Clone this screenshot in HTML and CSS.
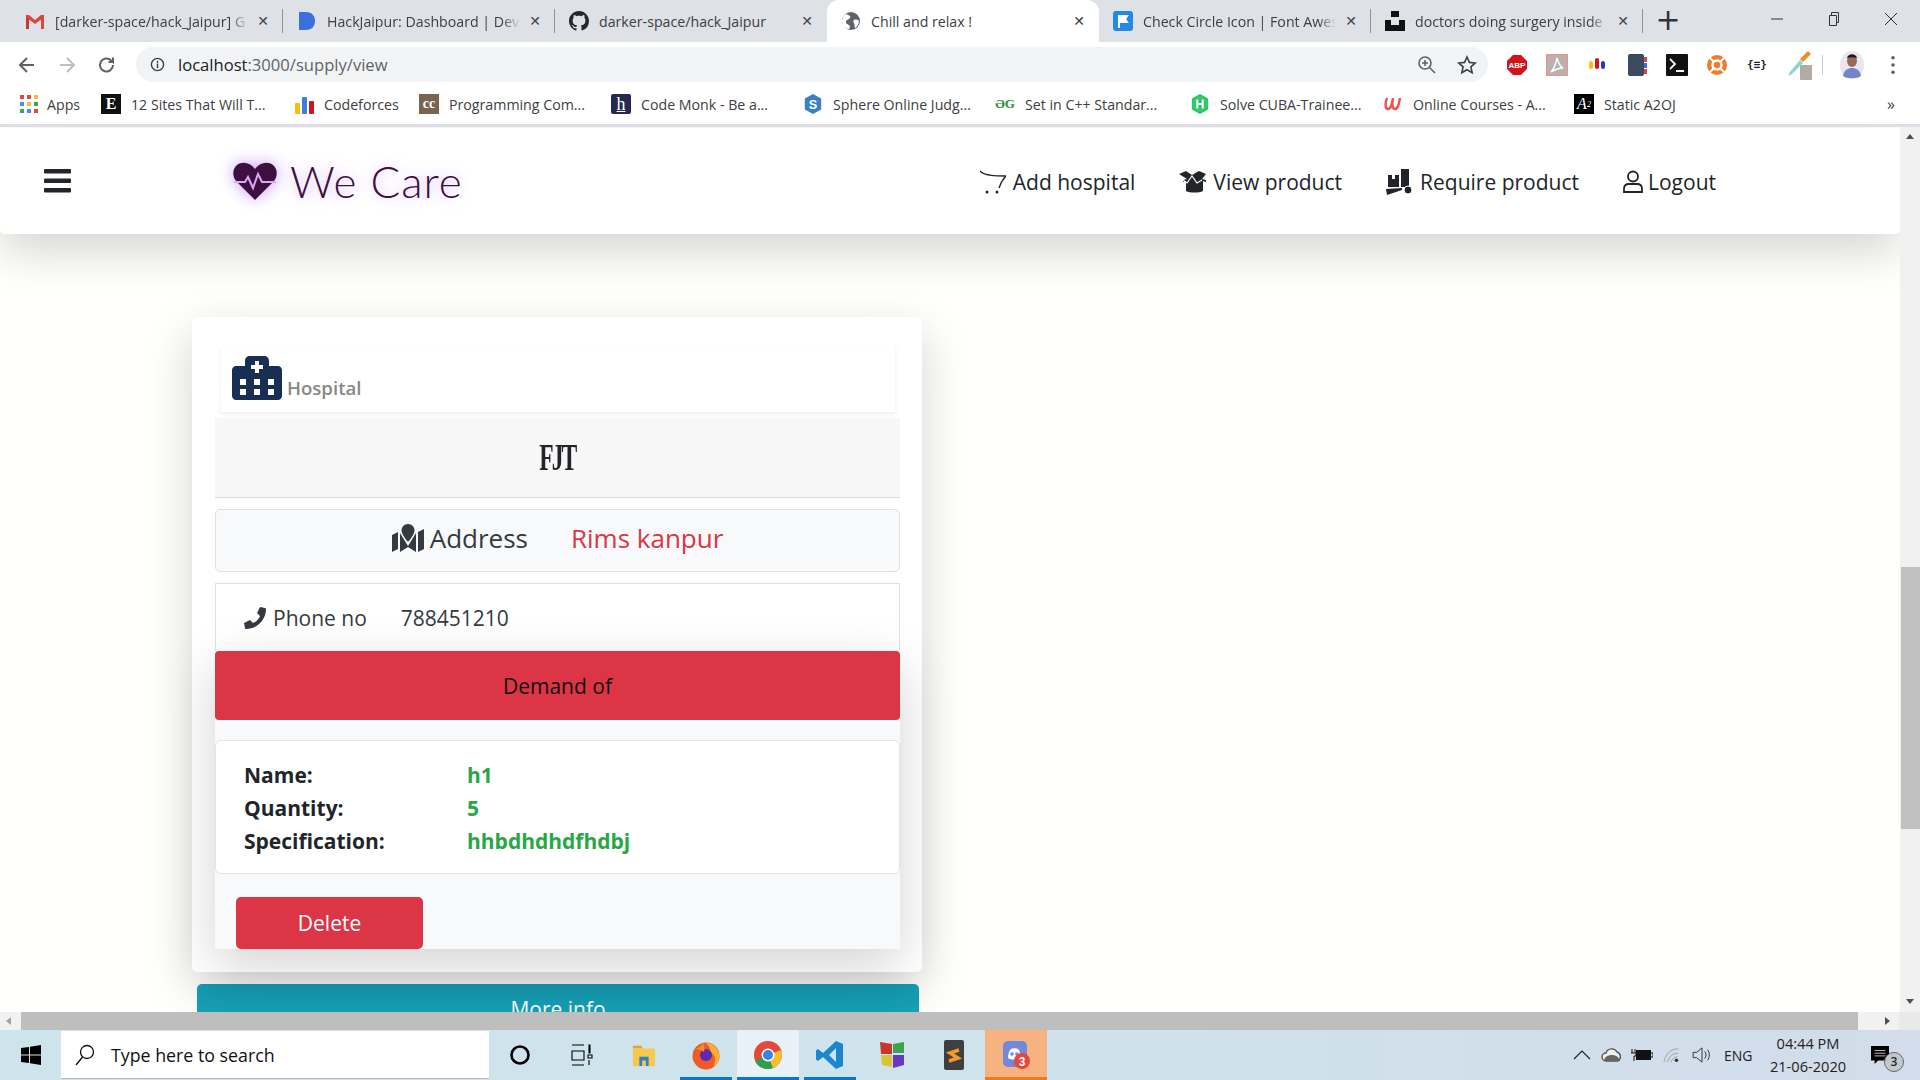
FILE: index.html
```html
<!DOCTYPE html>
<html lang="en">
<head>
<meta charset="utf-8">
<title>Chill and relax !</title>
<link rel="stylesheet" href="styles.css">
</head>
<body>
<div class="browser">
  <div class="tabstrip">
    <div class="tab sep">
      <svg class="fav" viewBox="0 0 20 20"><path d="M1 4h3l6 5 6-5h3v14h-3V8.500L10 13 4 8.500V18H1z" fill="#d9483b"/><path d="M4 18V8.500L1 5v13z" fill="#c5392c"/></svg>
      <span class="tab-title">[darker-space/hack_Jaipur] G</span><span class="x">✕</span>
    </div>
    <div class="tab sep">
      <svg class="fav" viewBox="0 0 20 20"><path d="M2 1h7c6 0 9 4 9 9s-3 9-9 9H2z" fill="#3b6fe0"/></svg>
      <span class="tab-title">HackJaipur: Dashboard | Devf</span><span class="x">✕</span>
    </div>
    <div class="tab">
      <svg class="fav" viewBox="0 0 16 16"><path fill="#24292e" d="M8 0C3.58 0 0 3.58 0 8c0 3.54 2.29 6.53 5.47 7.59.4.07.55-.17.55-.38 0-.19-.01-.82-.01-1.49-2.01.37-2.53-.49-2.69-.94-.09-.23-.48-.94-.82-1.13-.28-.15-.68-.52-.01-.53.63-.01 1.08.58 1.23.82.72 1.21 1.87.87 2.33.66.07-.52.28-.87.51-1.07-1.78-.2-3.64-.89-3.64-3.95 0-.87.31-1.59.82-2.15-.08-.2-.36-1.02.08-2.12 0 0 .67-.21 2.2.82.64-.18 1.32-.27 2-.27.68 0 1.36.09 2 .27 1.53-1.04 2.2-.82 2.2-.82.44 1.1.16 1.92.08 2.12.51.56.82 1.27.82 2.15 0 3.07-1.87 3.75-3.65 3.95.29.25.54.73.54 1.48 0 1.07-.01 1.93-.01 2.2 0 .21.15.46.55.38A8.013 8.013 0 0016 8c0-4.42-3.58-8-8-8z"/></svg>
      <span class="tab-title">darker-space/hack_Jaipur</span><span class="x">✕</span>
    </div>
    <div class="tab active">
      <svg class="fav" viewBox="0 0 20 20"><circle cx="10" cy="10" r="9" fill="#5f6368"/><path d="M5 3c3 1 5 2 4 4S5 8 5 11s4 2 4 5l-1 2c-4 0-7-3-7-8 0-3 2-6 4-7zM13 9c2-1 4 0 5 1 0 3-2 6-4 7-1-2 0-3-1-5-1-1-1-2 0-3z" fill="#fff"/></svg>
      <span class="tab-title">Chill and relax !</span><span class="x">✕</span>
    </div>
    <div class="tab sep">
      <svg class="fav" viewBox="0 0 20 20"><rect width="20" height="20" rx="3" fill="#228ae6"/><path d="M6 4v13M6 5h8l-2 3 2 3H6" stroke="#fff" stroke-width="2" fill="#fff"/></svg>
      <span class="tab-title">Check Circle Icon | Font Awes</span><span class="x">✕</span>
    </div>
    <div class="tab sep">
      <svg class="fav" viewBox="0 0 20 20"><path d="M6 0h8v6H6zM0 9h6v5h8V9h6v11H0z" fill="#111"/></svg>
      <span class="tab-title">doctors doing surgery inside</span><span class="x">✕</span>
    </div>
    <span class="newtab">+</span>
    <div class="winctl">
      <svg class="wc" viewBox="0 0 14 14"><path d="M1 7h12" stroke="#333" fill="none"/></svg>
      <svg class="wc" viewBox="0 0 14 14"><path d="M2.500 3.500h7v10h-7zM4.500 3.500V.5h7v10h-2" stroke="#333" fill="none"/></svg>
      <svg class="wc" viewBox="0 0 14 14"><path d="M1 1l12 12M13 1L1 13" stroke="#333" fill="none"/></svg>
    </div>
  </div>

  <div class="toolbar">
    <div class="nav-btns">
      <svg class="tb" viewBox="0 0 20 20"><path d="M17 10H4M10 3l-7 7 7 7" stroke="#5f6368" stroke-width="2" fill="none"/></svg>
      <svg class="tb" viewBox="0 0 20 20"><path d="M3 10h13M10 3l7 7-7 7" stroke="#bcbec1" stroke-width="2" fill="none"/></svg>
      <svg class="tb" viewBox="0 0 20 20"><path d="M16 10a6.500 6.500 0 1 1-2-4.700L16 7V2.500M16 7h-4.500" stroke="#5f6368" stroke-width="2" fill="none"/></svg>
    </div>
    <div class="omnibox">
      <svg class="omni-i" viewBox="0 0 16 16"><circle cx="8" cy="8" r="6.500" stroke="#3c4043" stroke-width="1.500" fill="none"/><path d="M8 7v5M8 4v2" stroke="#3c4043" stroke-width="1.500"/></svg>
      <span class="url">localhost<span class="url-dim">:3000/supply/view</span></span>
      <svg class="omni-r" viewBox="0 0 20 20"><circle cx="8" cy="8" r="6" stroke="#5f6368" stroke-width="1.600" fill="none"/><path d="M12.500 12.500L18 18M5 8h6M8 5v6" stroke="#5f6368" stroke-width="1.600"/></svg>
      <svg class="omni-r" viewBox="0 0 20 20"><path d="M10 2l2.400 5.400 5.800.6-4.300 3.900 1.200 5.800-5.100-3-5.100 3 1.200-5.800L1.800 8l5.800-.6z" stroke="#3c4043" stroke-width="1.600" fill="none"/></svg>
    </div>
    <div class="exts">
      <svg class="ext" viewBox="0 0 22 22"><path d="M7 1h8l6 6v8l-6 6H7l-6-6V7z" fill="#d3121c"/><text x="11" y="14" class="abp">ABP</text></svg>
      <svg class="ext" viewBox="0 0 22 22"><rect x=".5" y=".5" width="21" height="21" fill="#b9b1ad" stroke="#f0908a"/><path d="M11 4c-1 4-2 10-6 14 5-3 8-4 12-4-4-2-5-6-6-10z" fill="none" stroke="#fff" stroke-width="1.400"/></svg>
      <svg class="ext" viewBox="0 0 22 22"><rect x="3" y="7" width="4" height="8" rx="2" fill="#f4c20d"/><rect x="9" y="4" width="4" height="11" rx="2" fill="#d3121c"/><rect x="15" y="7" width="4" height="8" rx="2" fill="#1a3fd0"/></svg>
      <svg class="ext" viewBox="0 0 22 22"><rect x="2" y="0" width="16" height="22" rx="2" fill="#3b4a5c"/><rect x="18" y="3" width="3" height="5" fill="#d9483b"/><rect x="18" y="9" width="3" height="5" fill="#3b6fe0"/><rect x="18" y="15" width="3" height="5" fill="#d9483b"/></svg>
      <svg class="ext" viewBox="0 0 22 22"><rect width="22" height="22" rx="1" fill="#111"/><path d="M4 5l5 5-5 5M10 17h8" stroke="#fff" stroke-width="1.800" fill="none"/></svg>
      <svg class="ext" viewBox="0 0 22 22"><circle cx="11" cy="11" r="10" fill="#ef7c2d"/><circle cx="11" cy="11" r="4.500" fill="none" stroke="#fff" stroke-width="2.500"/><path d="M4 4l4 4M18 4l-4 4M4 18l4-4M18 18l-4-4" stroke="#fff" stroke-width="2"/></svg>
      <span class="ext json">{≡}</span>
      <svg class="ext" viewBox="0 0 26 30"><path d="M22 1l3 3-8 8-3-3z" fill="#f08a24"/><path d="M14 10l3 3-11 11-4 2 2-4z" fill="#8ed0d6"/><rect x="14" y="15" width="12" height="15" rx="1" fill="#b2aaa4"/></svg>
      <span class="ext-sep"></span>
      <svg class="avatar" viewBox="0 0 24 28"><ellipse cx="12" cy="14" rx="12" ry="14" fill="#e9e6ef"/><ellipse cx="12" cy="10" rx="5" ry="6" fill="#9a6b52"/><path d="M7 7c1-5 9-5 10 0-3-1-7-1-10 0z" fill="#1d1a1e"/><path d="M3 25c1-6 5-8 9-8s8 2 9 8c-3 3-15 3-18 0z" fill="#7484c8"/></svg>
      <svg class="menu-dots" viewBox="0 0 6 22"><circle cx="3" cy="3" r="2" fill="#5f6368"/><circle cx="3" cy="11" r="2" fill="#5f6368"/><circle cx="3" cy="19" r="2" fill="#5f6368"/></svg>
    </div>
  </div>

  <div class="bookmarks">
    <div class="bm"><svg class="fav bm-apps" viewBox="0 0 18 18"><g><rect x="0" y="0" width="4" height="4" fill="#e8453c"/><rect x="7" y="0" width="4" height="4" fill="#e8453c"/><rect x="14" y="0" width="4" height="4" fill="#f9bb2d"/><rect x="0" y="7" width="4" height="4" fill="#4a8af4"/><rect x="7" y="7" width="4" height="4" fill="#f9bb2d"/><rect x="14" y="7" width="4" height="4" fill="#3aa757"/><rect x="0" y="14" width="4" height="4" fill="#3aa757"/><rect x="7" y="14" width="4" height="4" fill="#4a8af4"/><rect x="14" y="14" width="4" height="4" fill="#e8453c"/></g></svg><span>Apps</span></div>
    <div class="bm"><span class="fav bm-e">E</span><span>12 Sites That Will T...</span></div>
    <div class="bm"><svg class="fav" viewBox="0 0 20 20"><rect x="1" y="9" width="5" height="11" rx="1" fill="#f4c20d"/><rect x="8" y="3" width="5" height="17" rx="1" fill="#3b7fd9"/><rect x="15" y="7" width="5" height="13" rx="1" fill="#d3121c"/></svg><span>Codeforces</span></div>
    <div class="bm"><span class="fav bm-cc">cc</span><span>Programming Com...</span></div>
    <div class="bm"><span class="fav bm-h">h</span><span>Code Monk - Be a...</span></div>
    <div class="bm"><svg class="fav" viewBox="0 0 20 22"><path d="M10 0l9 5v12l-9 5-9-5V5z" fill="#3a80c9"/><text x="10" y="16" class="gl">S</text></svg><span>Sphere Online Judg...</span></div>
    <div class="bm"><span class="fav bm-gfg">ƏG</span><span>Set in C++ Standar...</span></div>
    <div class="bm"><svg class="fav" viewBox="0 0 20 22"><path d="M10 0l9 5v12l-9 5-9-5V5z" fill="#2ec866"/><path d="M7 6v10M13 6v10M7 11h6" stroke="#fff" stroke-width="2.200"/></svg><span>Solve CUBA-Trainee...</span></div>
    <div class="bm"><svg class="fav" viewBox="0 0 20 20"><path d="M4 4c-2 5-2 11 1 11 3 0 4-6 5-11-1 5-1 11 2 11 3 0 4-5 5-11" stroke="#ec5252" stroke-width="2.400" fill="none"/></svg><span>Online Courses - A...</span></div>
    <div class="bm"><span class="fav bm-a">A<sup>2</sup></span><span>Static A2OJ</span></div>
    <span class="bm-more">»</span>
  </div>

  <div class="viewport">
    <div class="page">
      <header class="navbar">
        <svg class="burger" viewBox="0 0 27 24"><rect y="0" width="27" height="4.500" rx="1"/><rect y="9.500" width="27" height="4.500" rx="1"/><rect y="19" width="27" height="4.500" rx="1"/></svg>
        <div class="brand">
          <svg class="heart" viewBox="0 0 44 40"><path d="M22 39L4 21C-1 16-1 8 4 4c5-4 13-3 18 4 5-7 13-8 18-4 5 4 5 12 0 17z" fill="#3f0f40"/><path d="M1 21h11l3-5 5 11 5-14 4 8h14" stroke="#d9a9f5" stroke-width="2" fill="none"/></svg>
          <span class="brand-text">We Care</span>
        </div>
        <nav class="links">
          <a class="link"><svg class="ic-cart" viewBox="0 0 26 24"><path d="M0 1c5 5 16 5 26 5-4 4-6 9-7 12" stroke="#212529" stroke-width="1.300" fill="none"/><circle cx="7" cy="22" r="1.500" fill="#212529"/><circle cx="17" cy="22" r="1.500" fill="#212529"/></svg>Add hospital</a>
          <a class="link"><svg class="ic-box" viewBox="0 0 27 22"><path d="M0 3l7-3 6 4 7-4 7 3-4 5 4 1v2l-3-1v10c-4 2-13 2-17 0V10l-3 1V9l4-1z" fill="#212529"/><path d="M4 9l4 3 5-7 5 7 5-3" stroke="#fff" stroke-width="1.200" fill="none"/></svg>View product</a>
          <a class="link"><svg class="ic-truck" viewBox="0 0 27 26"><path d="M15 0h8v18h-8z" fill="#212529"/><path d="M2 6h11v12H2z" fill="#212529"/><path d="M6 6h3v4H6z" fill="#fff"/><path d="M0 20l16-1v2L1 26z" fill="#212529"/><circle cx="22" cy="21" r="4" fill="#212529" stroke="#fff"/></svg>Require product</a>
          <a class="link link-user"><svg class="ic-user" viewBox="0 0 20 24"><circle cx="10" cy="6.500" r="5" stroke="#212529" stroke-width="1.800" fill="none"/><path d="M1 22v-3c0-3 2-5 5-5h8c3 0 5 2 5 5v3z" stroke="#212529" stroke-width="1.800" fill="none"/></svg>Logout</a>
        </nav>
      </header>

      <main class="content">
        <section class="card">
          <div class="hosp-head">
            <svg class="ic-hosp" viewBox="0 0 50 44"><path d="M13 5c0-3 2-5 5-5h14c3 0 5 2 5 5v5h9c2 0 4 2 4 4v26c0 2-2 4-4 4H4c-2 0-4-2-4-4V14c0-2 2-4 4-4h9z" fill="#172f53"/><path d="M23 5h4v4h4v4h-4v4h-4v-4h-4V9h4z" fill="#fff"/><g fill="#fff"><rect x="8" y="23" width="6" height="6"/><rect x="22" y="23" width="6" height="6"/><rect x="36" y="23" width="6" height="6"/><rect x="8" y="33" width="6" height="6"/><rect x="22" y="33" width="6" height="6"/><rect x="36" y="33" width="6" height="6"/></g></svg>
            <span class="hosp-label">Hospital</span>
          </div>
          <div class="hosp-name"><span class="hosp-name-text">FJT</span></div>
          <div class="address">
            <svg class="ic-map" viewBox="0 0 32 28"><path d="M0 11l6-3v17l-6 3zM26 8l6-3v20l-6 3zM8 9l8 13 8-13v19l-8-5-8 5z" fill="#343a40"/><path d="M16 0c4 0 6.500 3 6.500 6.500 0 3-3.500 8-6.500 11.500-3-3.500-6.500-8.500-6.500-11.500C9.500 3 12 0 16 0z" fill="#343a40"/></svg>
            <span class="addr-label">Address</span>
            <span class="addr-val">Rims kanpur</span>
          </div>
          <div class="phone">
            <svg class="ic-phone" viewBox="0 0 22 22"><path d="M21 1l-5-1-3 6 3 3c-1 3-4 6-7 7l-3-3-6 3 1 5c0 1 1 1 1 1C13 22 22 13 22 2c0 0 0-1-1-1z" fill="#343a40"/></svg>
            <span class="ph-label">Phone no</span>
            <span class="ph-val">788451210</span>
          </div>
          <div class="demand-block">
            <div class="demand">Demand of</div>
            <div class="panel">
              <dl class="specs">
                <dt>Name:</dt><dd>h1</dd>
                <dt>Quantity:</dt><dd>5</dd>
                <dt>Specification:</dt><dd>hhbdhdhdfhdbj</dd>
              </dl>
              <button class="delete">Delete</button>
            </div>
          </div>
        </section>
        <button class="more">More info</button>
      </main>
    </div>
    <div class="vscroll">
      <span class="arr-up"></span>
      <span class="vthumb"></span>
      <span class="arr-down"></span>
    </div>
  </div>

  <div class="hscroll">
    <span class="arr-left"></span>
    <span class="hthumb"></span>
    <span class="arr-right"></span>
    <span class="corner"></span>
  </div>

  <div class="taskbar">
    <div class="start"><svg class="win" viewBox="0 0 20 20"><path d="M0 3l8-1v7.500H0zM9 1.800L20 0v9.500H9zM0 10.500h8V18l-8-1zM9 10.500h11V20L9 18.200z" fill="#000"/></svg></div>
    <div class="search">
      <svg class="search-i" viewBox="0 0 20 22"><circle cx="12" cy="8" r="6.500" stroke="#111" stroke-width="1.300" fill="none"/><path d="M7.500 13L1 21" stroke="#111" stroke-width="1.300"/></svg>
      <span>Type here to search</span>
    </div>
    <div class="tasks">
      <div class="task"><svg class="ti" viewBox="0 0 24 24"><circle cx="12" cy="12" r="8.500" stroke="#000" stroke-width="2.600" fill="none"/></svg></div>
      <div class="task"><svg class="ti" viewBox="0 0 24 24"><path d="M2 2h12M2 22h12M2 8h12v9H2zM19 2v8h1V2zM18 12h4v3h-4zM19 17v5" stroke="#000" stroke-width="1.100" fill="none"/></svg></div>
      <div class="task"><svg class="ti" viewBox="0 0 26 26"><path d="M1 3h9l2 3H1z" fill="#dca53a"/><path d="M1 6h24v19H1z" fill="#f6c94c"/><path d="M8 25V15h10v10h-3v-6h-4v6z" fill="#2f7fcf"/></svg></div>
      <div class="task run"><svg class="ti-lg" viewBox="0 0 30 30"><circle cx="15" cy="16" r="13.500" fill="#ef5a2a"/><path d="M15 3c4 0 11 3 13 11 1 6-2 11-6 13 4-6 2-13-3-15 1-3-1-6-4-9z" fill="#fdb32b"/><circle cx="15" cy="15" r="6" fill="#5b2ab0"/><path d="M12 3c-2 4-5 5-8 6 3 0 7 1 9 3 1-3 0-6-1-9z" fill="#f88c1e"/></svg></div>
      <div class="task run active-task"><svg class="ti-lg" viewBox="0 0 30 30"><circle cx="15" cy="15" r="14" fill="#e2483b"/><path d="M15 15L2 21A14 14 0 0 0 20 28z" fill="#2f9e4f"/><path d="M15 15L20 28A14 14 0 0 0 28 10z" fill="#f6c12d"/><circle cx="15" cy="15" r="6.500" fill="#fff"/><circle cx="15" cy="15" r="5" fill="#3b82e6"/></svg></div>
      <div class="task run"><svg class="ti-lg" viewBox="0 0 30 30"><path d="M21 1l7 3v22l-7 3L8 17l-5 4-2-1.500V10.500L3 9l5 4zM21 8l-7 7 7 7z" fill="#1a86d0"/></svg></div>
      <div class="task"><svg class="ti-lg" viewBox="0 0 30 30"><path d="M3 2l12 2v10H4z" fill="#c8352e"/><path d="M16 4l11-2v11H16z" fill="#3aa54a"/><path d="M4 15h11v12l-10-2z" fill="#d9c23a"/><path d="M16 15h11v10l-11 3z" fill="#6a35c2"/></svg></div>
      <div class="task"><svg class="ti-lg" viewBox="0 0 30 30"><rect x="5" width="20" height="30" rx="2" fill="#3d3f41"/><path d="M20 10l-9 3 8 5-9 3" stroke="#f79a25" stroke-width="3.500" fill="none"/></svg></div>
      <div class="task discord"><svg class="ti-lg" viewBox="0 0 30 30"><rect x="2" y="1" width="24" height="26" rx="5" fill="#7289da"/><path d="M7 18c3 2 9 2 13 0-1-5-1-7-3-9-2-1-5-1-7 0-2 2-3 5-3 9z" fill="#fff"/><circle cx="11" cy="14" r="1.800" fill="#7289da"/><circle cx="16" cy="14" r="1.800" fill="#7289da"/><circle cx="21" cy="21" r="8" fill="#e8453c"/><text x="21" y="25.500" class="badge-t">3</text></svg></div>
    </div>
    <div class="tray">
      <svg class="tr caret" viewBox="0 0 18 10"><path d="M1 9l8-8 8 8" stroke="#222" stroke-width="1.200" fill="none"/></svg>
      <svg class="tr" viewBox="0 0 22 16"><path d="M5 14a4 4 0 0 1 0-8 6 6 0 0 1 11-1 5 5 0 0 1 1 9z" fill="#f2f2f2" stroke="#555" stroke-width="1.400"/><path d="M3 14c0-4 4-6 8-6s7 2 8 6z" fill="#666"/></svg>
      <svg class="tr" viewBox="0 0 22 14"><rect x="5" y="2" width="15" height="10" fill="#111"/><path d="M20 5h2v4h-2M1 1v4M4 1v4M0 5h5v3H3v5" stroke="#111" fill="none"/></svg>
      <svg class="tr" viewBox="0 0 20 18"><circle cx="15" cy="15" r="2" fill="#333"/><path d="M1 17C2 9 8 2 17 2M5 17c1-5 5-10 12-10M9 17c1-3 3-6 7-6" stroke="#999" fill="none"/></svg>
      <svg class="tr" viewBox="0 0 22 18"><path d="M1 6h4l6-5v16l-6-5H1z" stroke="#222" fill="none"/><path d="M14 5c2 2 2 6 0 8M17 3c3 3 3 9 0 12" stroke="#222" fill="none"/></svg>
      <span class="lang">ENG</span>
      <div class="clock"><span>04:44 PM</span><span>21-06-2020</span></div>
      <div class="notif">
        <svg class="notif-i" viewBox="0 0 22 20"><path d="M1 0h20v16H9l-4 4v-4H1z" fill="#000"/><path d="M5 5h12M5 8h12M5 11h12" stroke="#fff" stroke-width=".800"/></svg>
        <span class="notif-b">3</span>
      </div>
    </div>
  </div>
</div>
</body>
</html>
```

FILE: styles.css
```css
* { box-sizing: border-box; }
html, body { margin: 0; height: 100%; overflow: hidden; }
body { font-family: "Open Sans", "Noto Sans", sans-serif; color: #212529; }
.browser { display: flex; flex-direction: column; height: 1080px; width: 1920px; }

/* tab strip */
.tabstrip { display: flex; align-items: stretch; height: 42px; background: #dee1e6; padding-left: 11px; flex: none; }
.tab { width: 272px; display: flex; align-items: center; padding: 0 11px 0 14px; position: relative; font-size: 14.200px; color: #3c4043; }
.tab.sep::after { content: ""; position: absolute; right: 0; top: 9px; height: 24px; width: 1px; background: #8f9296; }
.tab.active { background: #fff; border-radius: 12px 12px 0 0; padding-left: 14px; }
.fav { width: 20px; height: 20px; flex: none; }
.tab-title { flex: 1; margin-left: 10px; white-space: nowrap; overflow: hidden; -webkit-mask-image: linear-gradient(to right, #000 90%, transparent 99%); mask-image: linear-gradient(to right, #000 90%, transparent 99%); }
.tab.active .tab-title, .tab:nth-child(3) .tab-title { -webkit-mask-image: none; mask-image: none; }
.x { width: 18px; margin-left: 4px; text-align: center; font-size: 14px; font-weight: 700; font-family: "DejaVu Sans", sans-serif; color: #3c4043; flex: none; }
.newtab { font-size: 30px; line-height: 40px; width: 50px; text-align: center; color: #333; font-family: "DejaVu Sans", sans-serif; }
.winctl { margin-left: auto; display: flex; align-items: flex-start; padding: 12px 22px 0 0; gap: 43px; }
.wc { width: 14px; height: 14px; }

/* toolbar */
.toolbar { height: 42px; padding-top: 3px; background: #fff; display: flex; align-items: center; flex: none; }
.nav-btns { display: flex; align-items: center; width: 136px; padding-left: 17px; gap: 20px; }
.tb { width: 20px; height: 20px; }
.omnibox { width: 1352px; height: 35px; border-radius: 18px; background: #f1f3f4; display: flex; align-items: center; padding-left: 14px; font-size: 16.600px; }
.omni-i { width: 15px; height: 15px; }
.url { margin-left: 13px; color: #202124; flex: 1; }
.url-dim { color: #5f6368; }
.omni-r { width: 20px; height: 20px; margin-right: 20px; }
.omni-r:last-child { margin-right: 11px; }
.exts { display: flex; align-items: center; padding-left: 18px; }
.ext { width: 22px; height: 22px; margin-right: 18px; flex: none; }
.ext.json { font-size: 11px; font-weight: 700; text-align: center; line-height: 22px; color: #222; font-family: "DejaVu Sans Mono", monospace; white-space: nowrap; }
svg.ext:nth-child(8) { width: 26px; height: 30px; margin-right: 10px; }
.ext-sep { width: 1px; height: 20px; background: #ccc; margin-right: 17px; }
.avatar { width: 24px; height: 28px; margin-right: 26px; }
.menu-dots { width: 6px; height: 20px; }
.abp { font: 700 8px "Liberation Sans", sans-serif; fill: #fff; text-anchor: middle; }
.gl { font: 700 14px "Liberation Sans", sans-serif; fill: #fff; text-anchor: middle; }
.badge-t { font: 700 12px "Liberation Sans", sans-serif; fill: #fff; text-anchor: middle; }

/* bookmarks */
.bookmarks { height: 43px; background: #fff; display: grid; grid-template-columns: 81px 193px 125px 192px 192px 192px 195px 193px 191px 307px 20px; padding-left: 20px; align-items: center; font-size: 14.200px; color: #3c4043; border-bottom: 3px solid #dfdee6; flex: none; }
.bm { display: flex; align-items: center; gap: 10px; white-space: nowrap; }
.bm .fav { display: flex; align-items: center; justify-content: center; font-family: "Liberation Serif", serif; }
.bm .bm-apps { width: 18px; height: 18px; margin-right: -1px; }
.bm-e { background: #111; color: #fff; font-weight: 700; font-size: 16px; }
.bm-cc { background: #7a6450; color: #fff; font-weight: 700; font-size: 14px; }
.bm-h { background: #25294f; color: #fff; font-size: 18px; border-radius: 2px; text-decoration: underline; }
.bm-gfg { color: #2f8d46; font-size: 13px; font-weight: 700; font-family: "Liberation Sans", sans-serif; }
.bm-a { background: #000; color: #fff; font-size: 16px; font-style: italic; }
.bm-a sup { font-size: 8px; }
.bm-more { font-size: 16px; text-align: center; }

/* viewport */
.viewport { flex: 1; display: flex; min-height: 0; }
.page { width: 1900px; background: #fffffb; overflow: hidden; }
.navbar { height: 106px; margin-top: 1px; background: #fff; border-radius: 0 0 5px 5px; box-shadow: 0 16px 48px rgba(0, 0, 0, .175); display: flex; align-items: center; padding: 0 184px 0 44px; position: relative; z-index: 2; }
.burger { width: 27px; height: 24px; fill: #212529; }
.brand { display: flex; align-items: center; margin-left: 162px; }
.heart { width: 44px; height: 40px; filter: drop-shadow(0 0 8px #c79cf5); }
.brand-text { font-family: "Lato", sans-serif; font-weight: 300; font-size: 44px; color: #3f0f40; margin-left: 13px; letter-spacing: 1px; text-shadow: 0 0 14px #d0a8fa; }
.links { margin-left: auto; display: flex; gap: 44px; align-items: center; padding-top: 2px; }
.link { display: flex; align-items: center; font-size: 21px; color: #212529; gap: 7px; white-space: nowrap; }
.link-user { gap: 5px; }
.ic-cart { width: 26px; height: 24px; }
.ic-box { width: 27px; height: 22px; }
.ic-truck { width: 27px; height: 26px; }
.ic-user { width: 20px; height: 24px; }

.content { padding: 83px 0 0 192px; }
.card { width: 730px; height: 655px; background: #fff; border-radius: 5px; box-shadow: 0 16px 48px rgba(0, 0, 0, .175); padding: 28px 22px 0 23px; position: relative; z-index: 1; }
.hosp-head { margin: 0 5px 0 6px; height: 67px; box-shadow: 0 2px 4px rgba(0, 0, 0, .075); display: flex; align-items: flex-end; padding: 0 0 12px 11px; }
.ic-hosp { width: 50px; height: 44px; flex: none; }
.hosp-label { font-size: 18.600px; font-weight: 600; color: #868886; margin-left: 5px; line-height: 24px; }
.hosp-name { margin-top: 6px; height: 80px; background: #f7f7f7; border-bottom: 1px solid #d9d9d9; display: flex; align-items: center; justify-content: center; }
.hosp-name-text { display: inline-block; font-family: "Liberation Serif", serif; font-weight: 700; font-size: 38px; letter-spacing: -3px; color: #212529; transform: scaleX(.62); margin-bottom: 2px; }
.address { margin-top: 11px; height: 63px; padding-bottom: 5px; border: 1px solid #dfe0e1; border-radius: 5px; background: #f8f9fa; display: flex; align-items: center; justify-content: center; font-size: 26px; font-weight: 500; }
.ic-map { width: 32px; height: 28px; margin-right: -1px; }
.addr-label { color: #343a40; margin-left: 7px; }
.addr-val { color: #dc3545; margin-left: 43px; }
.phone { margin-top: 11px; height: 68px; border: 1px solid #dee2e6; border-bottom: 0; display: flex; align-items: center; padding: 0 0 0 28px; font-size: 21px; }
.ic-phone { width: 22px; height: 22px; }
.ph-label { color: #343a40; margin-left: 7px; }
.ph-val { margin-left: 34px; color: #343a40; }
.demand-block { box-shadow: 0 16px 48px rgba(0, 0, 0, .175); }
.demand { height: 69px; background: #dc3545; border-radius: 4px; display: flex; align-items: center; justify-content: center; font-size: 21px; color: #111; }
.panel { background: #f8f9fa; height: 229px; padding-top: 20px; }
.specs { margin: 0; height: 134px; border: 1px solid #e2e4e8; border-radius: 6px; background: #fff; padding: 17px 28px; display: grid; grid-template-columns: 223px 1fr; grid-auto-rows: 33px; align-items: center; font-size: 21px; font-weight: 700; }
.specs dt { color: #212529; }
.specs dd { margin: 0; color: #28a745; }
.delete { display: block; margin: 23px 0 0 21px; width: 187px; height: 52px; border: 0; border-radius: 5px; background: #dc3545; color: #fff; font: 21px "Open Sans", sans-serif; }
.more { display: block; margin: 12px 0 0 5px; width: 722px; height: 50px; border: 0; border-radius: 5px; background: #17a2b8; color: #fff; font: 21px "Open Sans", sans-serif; }

/* scrollbars */
.vscroll { width: 20px; background: #f1f1f1; position: relative; display: flex; flex-direction: column; align-items: stretch; }
.arr-up, .arr-down { height: 20px; display: block; position: relative; flex: none; }
.arr-up::after, .arr-down::after { content: ""; position: absolute; left: 6px; top: 7px; border: 4px solid transparent; }
.arr-up::after { border-bottom: 5px solid #505050; border-top: 0; }
.arr-down::after { border-top: 5px solid #505050; border-bottom: 0; }
.vthumb { height: 262px; margin-top: 420px; margin-left: 1px; background: #c1c1c1; display: block; flex: none; }
.arr-down { margin-top: auto; }
.hscroll { height: 18px; background: #f1f1f1; display: flex; align-items: stretch; flex: none; }
.arr-left, .arr-right { width: 21px; position: relative; flex: none; }
.arr-left::after, .arr-right::after { content: ""; position: absolute; top: 5px; border: 4px solid transparent; }
.arr-left::after { left: 6px; border-right: 5px solid #a3a3a3; border-left: 0; }
.arr-right::after { left: 7px; border-left: 5px solid #505050; border-right: 0; }
.arr-right { margin-left: 20px; }
.hthumb { width: 1837px; background: #bebebe; flex: none; }
.corner { width: 21px; background: #e9e9e9; flex: none; }

/* taskbar */
.taskbar { height: 50px; background: linear-gradient(to right, #cde4ec, #cfe3ec 50%, #d2dcea); display: flex; align-items: stretch; flex: none; }
.start { width: 61px; display: flex; align-items: center; justify-content: center; }
.win { width: 20px; height: 20px; }
.search { width: 428px; margin: 1px 0; background: #fff; display: flex; align-items: center; padding-left: 14px; font-size: 17.800px; color: #111; border-bottom: 1px solid #bbb; }
.search-i { width: 20px; height: 22px; margin-right: 16px; }
.tasks { display: flex; }
.task { width: 62px; display: flex; align-items: center; justify-content: center; position: relative; }
.ti { width: 24px; height: 24px; }
.ti-lg { width: 30px; height: 30px; }
.task.run::after { content: ""; position: absolute; bottom: 0; left: 5px; right: 5px; height: 3px; background: #0078d7; }
.active-task { background: #e8f2f6; }
.task.active-task::after { left: 0; right: 0; }
.discord { background: #f6b27f; }
.discord::after { content: ""; position: absolute; bottom: 0; left: 0; right: 0; height: 3px; background: #f07b16; }
.tray { margin-left: auto; display: flex; align-items: center; }
.tr { width: 22px; height: 16px; margin-right: 8px; }
.tr.caret { width: 18px; height: 10px; margin-right: 10px; }
.lang { font-size: 14px; margin-left: 3px; width: 42px; color: #222; }
.clock { display: flex; flex-direction: column; align-items: center; width: 84px; font-size: 14.600px; line-height: 23px; margin-right: 10px; color: #222; }
.notif { width: 60px; padding-left: 10px; position: relative; }
.notif-i { width: 20px; height: 18px; display: block; }
.notif-b { position: absolute; left: 24px; top: 6px; width: 20px; height: 20px; border-radius: 50%; background: #c4c8cc; border: 1px solid #666; font-size: 12px; font-weight: 600; text-align: center; line-height: 18px; }
```
